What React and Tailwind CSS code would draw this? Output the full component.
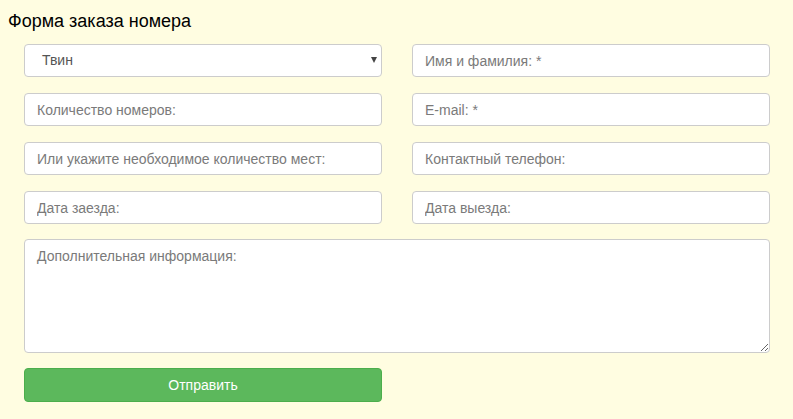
import React from 'react';

const inputCls =
    'w-full h-[33px] px-3 bg-white border border-[#cccccc] rounded-[4px] text-[14px] text-[#555] placeholder:text-[#7a7a7a] outline-none';

const App = () => {
    return (
        <div className="w-[793px] h-[419px] bg-[#fffde1] overflow-hidden" style={{ fontFamily: '"Liberation Sans", Arial, sans-serif' }}>
            <h2 className="pt-[11px] pl-[8px] text-[18px] leading-[20px] text-black">Форма заказа номера</h2>
            <form className="pl-[24px] pr-[23px] pt-[13px]">
                <div className="grid grid-cols-2 gap-x-[30px] gap-y-[16px]">
                    <div className="relative">
                        <div className="w-full h-[33px] pl-[17px] bg-white border border-[#cccccc] rounded-[4px] text-[14px] text-[#555] flex items-center">
                            Твин
                        </div>
                        <span className="absolute right-[5px] top-[13px] w-0 h-0 border-l-[3px] border-r-[3px] border-t-[6px] border-l-transparent border-r-transparent border-t-[#444]"></span>
                    </div>
                    <input className={inputCls} placeholder="Имя и фамилия: *" />
                    <input className={inputCls} placeholder="Количество номеров:" />
                    <input className={inputCls} placeholder="E-mail: *" />
                    <input className={inputCls} placeholder="Или укажите необходимое количество мест:" />
                    <input className={inputCls} placeholder="Контактный телефон:" />
                    <input className={inputCls} placeholder="Дата заезда:" />
                    <input className={inputCls} placeholder="Дата выезда:" />
                    <textarea
                        className="col-span-2 -mt-[1px] h-[114px] px-3 py-[6px] bg-white border border-[#cccccc] rounded-[4px] text-[14px] leading-[20px] text-[#555] placeholder:text-[#7a7a7a] outline-none"
                        placeholder="Дополнительная информация:"
                    ></textarea>
                    <button
                        type="button"
                        className="-mt-[1px] h-[34px] bg-[#5cb85c] border border-[#4cae4c] rounded-[4px] text-white text-[14px]"
                    >
                        Отправить
                    </button>
                </div>
            </form>
        </div>
    );
};

export default App;
